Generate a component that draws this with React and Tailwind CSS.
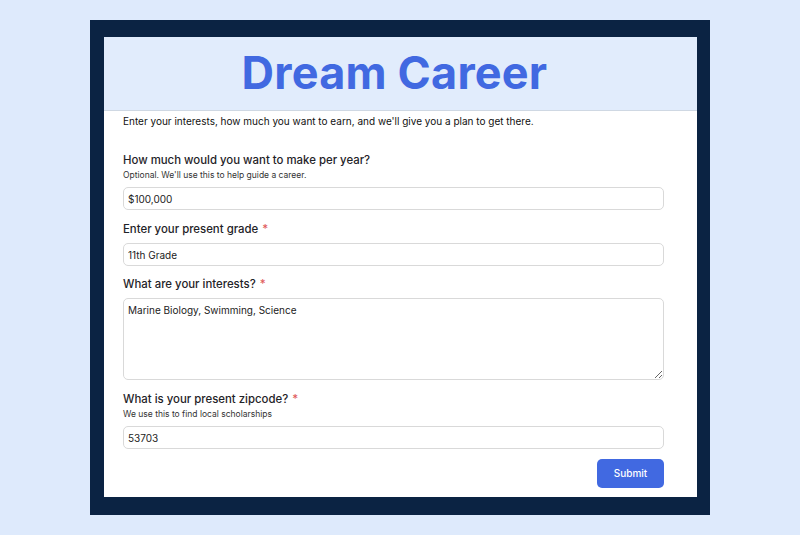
import React from 'react';

const font = { fontFamily: 'Inter, "Liberation Sans", sans-serif' };

function Label({ children, required }) {
  return (
    <label className="block text-[11.4px] leading-[18px] font-medium text-[#1f2328]">
      {children}
      {required && <span className="ml-[4px] text-[#e05a5a]">*</span>}
    </label>
  );
}

const inputCls =
  'block w-full h-[23px] rounded-[5px] border border-[#d9d9d9] bg-white px-[4px] text-[10px] text-[#222] outline-none';

export default function App() {
  return (
    <div className="min-h-screen bg-[#deeafc] pt-[20px]" style={font}>
      <div className="mx-auto w-[620px] bg-[#0b2343] pt-[17px] pb-[18px] pl-[14px] pr-[13px]">
        <div className="bg-white">
          <div className="h-[74px] bg-[#e1ecfc] border-b border-[#cfd8e3] flex items-center justify-center">
            <h1 className="text-[45px] font-bold text-[#4169e1] tracking-[0.2px] -ml-[12px] -mt-[2px]">Dream Career</h1>
          </div>
          <div className="pl-[19px] pr-[33px] pb-[9px]">
            <p className="mt-[2px] text-[10px] leading-[16px] text-[#111]">
              Enter your interests, how much you want to earn, and we'll give you a plan to get there.
            </p>

            <div className="mt-[22px]">
              <Label>How much would you want to make per year?</Label>
              <p className="text-[8.5px] leading-[12px] text-[#333]">Optional. We'll use this to help guide a career.</p>
              <input className={`${inputCls} mt-[6px]`} defaultValue="$100,000" />
            </div>

            <div className="mt-[10px]">
              <Label required>Enter your present grade</Label>
              <input className={`${inputCls} mt-[5px]`} defaultValue="11th Grade" />
            </div>

            <div className="mt-[9px]">
              <Label required>What are your interests?</Label>
              <textarea
                className="mt-[5px] block w-full h-[82px] rounded-[5px] border border-[#d9d9d9] bg-white px-[4px] py-[4px] text-[10px] leading-[14px] text-[#222] outline-none"
                defaultValue="Marine Biology, Swimming, Science"
              />
            </div>

            <div className="mt-[10px]">
              <Label required>What is your present zipcode?</Label>
              <p className="text-[8.5px] leading-[12px] text-[#333]">We use this to find local scholarships</p>
              <input className={`${inputCls} mt-[6px]`} defaultValue="53703" />
            </div>

            <div className="mt-[10px] flex justify-end">
              <button className="h-[29px] w-[67px] rounded-[5px] bg-[#4169e1] text-[10px] font-medium text-white">
                Submit
              </button>
            </div>
          </div>
        </div>
      </div>
    </div>
  );
}
